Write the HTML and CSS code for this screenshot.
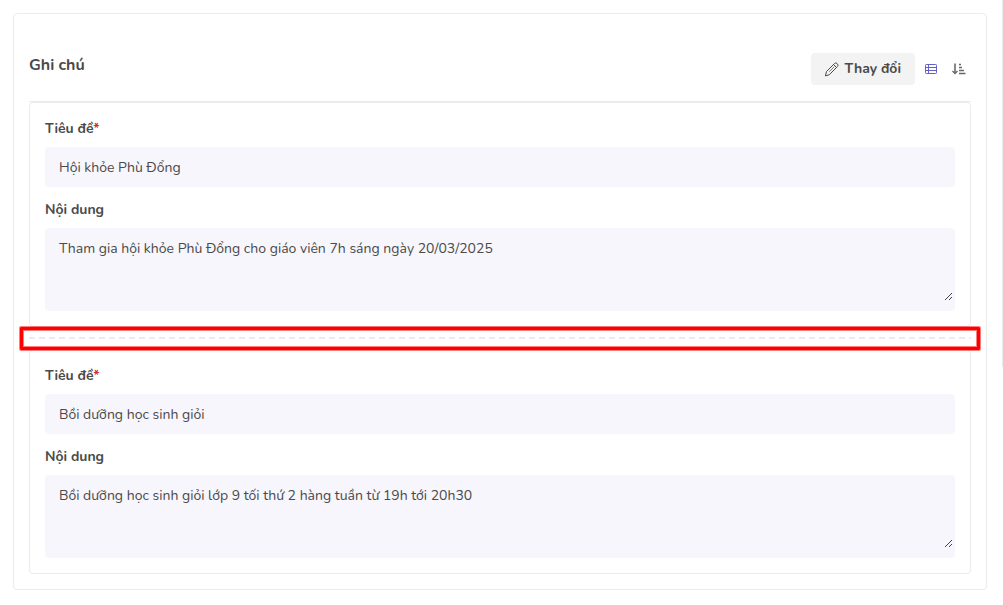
FILE: index.html
```
<!DOCTYPE html>
<html lang="vi">
<head>
	<meta charset="utf-8">
	<title>Ghi chú</title>
	<link rel="stylesheet" href="styles.css">
</head>
<body>
	<main class="card">
		<header class="card-header">
			<h1>Ghi chú</h1>
			<div class="tools">
				<button type="button" class="btn-edit">
					<svg width="16" height="16" viewBox="0 0 16 16" fill="none" stroke="#4a4a4a" stroke-linejoin="round" stroke-linecap="round">
						<path d="M1.500 14.500l1-4L10.500 2.500a1.800 1.800 0 0 1 2.500 0l.5.5a1.800 1.800 0 0 1 0 2.500L5.500 13.500z"/>
						<path d="M9.500 3.500l3 3"/>
						<path d="M10 6L5.500 10.500" stroke-width=".7"/>
					</svg>
					Thay đổi
				</button>
				<button type="button" class="btn-icon" aria-label="Bảng">
					<svg width="14" height="14" viewBox="0 0 14 14" fill="none" stroke="#6462c8">
						<rect x="1" y="2" width="12" height="10" rx="1" fill="#d9d8f3" stroke="none"/>
						<rect x="1.500" y="2.500" width="11" height="9" rx="1" fill="#fff"/>
						<path d="M4.500 2.500v9M1.500 5.500h11M1.500 8.500h11"/>
					</svg>
				</button>
				<button type="button" class="btn-icon" aria-label="Sắp xếp">
					<svg width="14" height="14" viewBox="0 0 14 14" fill="none" stroke="#666">
						<path d="M3 1.500v9" stroke="#888" stroke-width="2"/>
						<path d="M.5 9L3 11.500 5.500 9M7 2.500h2M7 5.500h3M7 8.500h5M7 11.500h6.500" stroke-width="1.300"/>
					</svg>
				</button>
			</div>
		</header>

		<section class="note">
			<label for="title-1">Tiêu đề<span class="required">*</span></label>
			<input id="title-1" type="text" value="Hội khỏe Phù Đổng">
			<label for="content-1">Nội dung</label>
			<textarea id="content-1">Tham gia hội khỏe Phù Đổng cho giáo viên 7h sáng ngày 20/03/2025</textarea>
		</section>

		<div class="separator">
			<div class="highlight"></div>
		</div>

		<section class="note">
			<label for="title-2">Tiêu đề<span class="required">*</span></label>
			<input id="title-2" type="text" value="Bồi dưỡng học sinh giỏi">
			<label for="content-2">Nội dung</label>
			<textarea id="content-2">Bồi dưỡng học sinh giỏi lớp 9 tối thứ 2 hàng tuần từ 19h tới 20h30</textarea>
		</section>
	</main>
	<aside class="side-panel"></aside>
</body>
</html>
```

FILE: styles.css
```
* {
	box-sizing: border-box;
}
body {
	display: flex;
	align-items: flex-start;
	margin: 0;
	background-color: #fff;
	color: #4a4a4a;
	font-family: Nunito, "Noto Sans", sans-serif;
	font-size: 14px;
	line-height: 21px;
}
.card {
	flex: 1;
	margin: 13px 15px 15px 13px;
	padding: 15px;
	border: 1px solid #ebebed;
	border-radius: 4px;
}
.card-header {
	display: flex;
	align-items: center;
	justify-content: space-between;
	height: 73px;
	border-bottom: 1px solid #ebebed;
}
h1 {
	margin: 0;
	font-size: 16px;
	font-weight: 700;
}
.tools {
	display: flex;
	align-items: center;
	gap: 9px;
	padding: 8px 5px 0 0;
}
button {
	border: 0;
	color: inherit;
	font: inherit;
}
.btn-edit {
	display: flex;
	align-items: center;
	gap: 5px;
	height: 32px;
	padding: 0 14px 0 13px;
	border-radius: 4px;
	background-color: #f3f3f3;
	font-weight: 700;
	line-height: 20px;
}
.btn-icon {
	display: flex;
	padding: 0;
	margin-right: 5px;
	background: none;
}
.btn-icon:last-child {
	margin-right: 0;
}
.note {
	display: flex;
	flex-direction: column;
	padding: 15px;
	border: 1px solid #ebebed;
	border-radius: 4px;
}
label {
	margin-bottom: 8px;
	font-weight: 700;
}
.required {
	color: #d0312d;
}
input, textarea {
	width: 100%;
	border: 0;
	border-radius: 4px;
	background-color: #f7f6fd;
	color: inherit;
	font: inherit;
}
input {
	height: 40px;
	margin-bottom: 12px;
	padding: 0 14px;
}
textarea {
	height: 83px;
	padding: 10px 14px;
	resize: vertical;
	background-image: url("data:image/svg+xml,%3Csvg xmlns='http://www.w3.org/2000/svg' width='7' height='7' stroke='%23444'%3E%3Cpath d='M0 7L7 0M4 7L7 4'/%3E%3C/svg%3E");
	background-repeat: no-repeat;
	background-position: right 3px bottom 11px;
}
textarea::-webkit-resizer {
	background: none;
}
.separator {
	position: relative;
	padding: 10px 0;
}
.separator::before {
	content: "";
	display: block;
	height: 2px;
	background: repeating-linear-gradient(90deg, #ebebed 0 6px, transparent 6px 10px);
}
.highlight {
	position: absolute;
	top: 0;
	bottom: -1px;
	left: -9px;
	right: -9px;
	border: 3px solid #f00;
	border-radius: 1px;
	box-shadow: 0 0 0 1px rgba(255, 0, 0, .5), inset 0 0 0 1px rgba(255, 0, 0, .5);
}
/* edge of the next panel */
.side-panel {
	width: 1px;
	height: 367px;
	background-color: #ebebed;
}
```
